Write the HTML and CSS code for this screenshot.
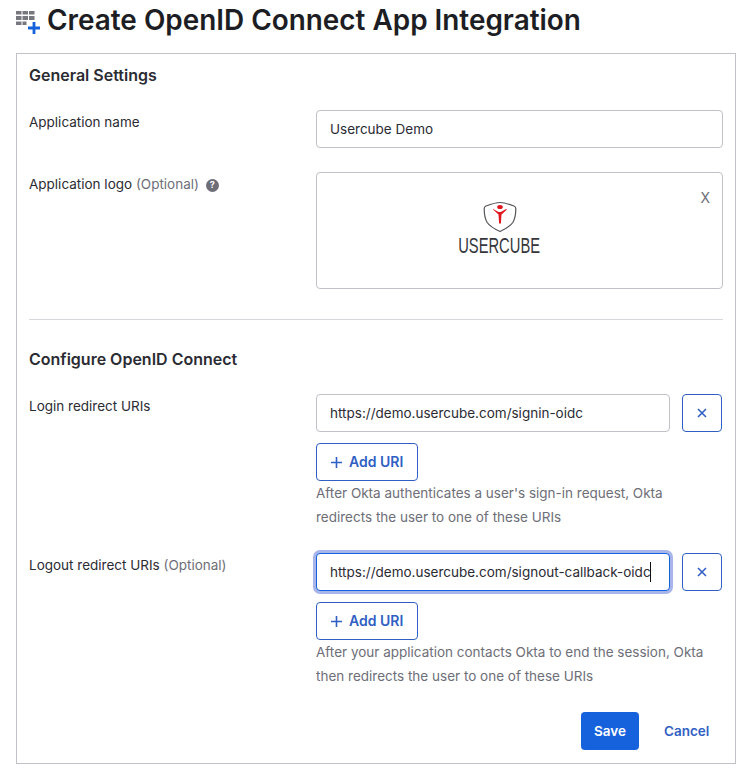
FILE: index.html
```html
<!DOCTYPE html>
<html lang="en">
<head>
<meta charset="utf-8">
<title>Create OpenID Connect App Integration</title>
<link rel="stylesheet" href="styles.css">
</head>
<body>
<header class="page-head">
  <svg class="head-icon" width="26" height="28" viewBox="0 0 26 28" aria-hidden="true">
    <g fill="#77777f">
      <rect x="0" y="1" width="5.500" height="3.500"/><rect x="6.500" y="1" width="5.500" height="3.500"/><rect x="13" y="1" width="5.500" height="3.500"/>
      <rect x="0" y="6" width="5.500" height="4"/><rect x="6.500" y="6" width="5.500" height="4"/><rect x="13" y="6" width="5.500" height="4"/>
      <rect x="0" y="11.500" width="5.500" height="3.500"/><rect x="6.500" y="11.500" width="4" height="3.500"/>
    </g>
    <path d="M18 12v12M12 18h12" stroke="#1662dd" stroke-width="2.800" fill="none"/>
  </svg>
  <h1 class="page-title">Create OpenID Connect App Integration</h1>
</header>

<main class="card">
  <h2 class="section-title">General Settings</h2>

  <div class="row row-name">
    <label class="label">Application name</label>
    <div class="control"><div class="input">Usercube Demo</div></div>
  </div>

  <div class="row row-logo">
    <label class="label">Application logo <span class="optional">(Optional)</span>
      <span class="help-dot">?</span></label>
    <div class="control">
      <div class="logo-box">
        <button class="logo-x">X</button>
        <div class="logo">
          <svg class="logo-mark" width="36" height="34" viewBox="27 0 36 34" aria-hidden="true">
            <path d="M45 3.500c4.500 0 10 2 14 3.500 1.300.5 1.800 1.300 1.800 2.500 0 5.500-.5 10-3 14-2.500 3.800-7.500 6.500-12.800 9-5.300-2.500-10.300-5.200-12.800-9-2.500-4-3-8.500-3-14 0-1.200.5-2 1.800-2.500 4-1.500 9.500-3.500 14-3.500z" fill="#fff" stroke="#55555a" stroke-width="1.200"/>
            <ellipse cx="45" cy="8" rx="2.800" ry="2" fill="#e0141c"/>
            <path d="M38 10.500l5.500 5 .6 9h1.800l.6-9 5.500-5-.9-.6-5.300 3.100h-2.400l-5.300-3.100z" fill="#e0141c"/>
          </svg>
          <span class="logo-text">USERCUBE</span>
        </div>
      </div>
    </div>
  </div>

  <hr class="divider">

  <h2 class="section-title section-oidc">Configure OpenID Connect</h2>

  <div class="row row-login">
    <label class="label">Login redirect URIs</label>
    <div class="control">
      <div class="uri-line">
        <div class="input">https://demo.usercube.com/signin-oidc</div>
        <button class="icon-btn" aria-label="Remove"><svg width="10" height="10" viewBox="0 0 10 10"><path d="M1 1l8 8M9 1l-8 8" stroke="#2f5fc4" stroke-width="1.600"/></svg></button>
      </div>
      <button class="add-btn"><svg width="11" height="11" viewBox="0 0 11 11"><path d="M5.500 0v11M0 5.500h11" stroke="#2f5fc4" stroke-width="1.600"/></svg>Add URI</button>
      <p class="hint">After Okta authenticates a user's sign-in request, Okta redirects the user to one of these URIs</p>
    </div>
  </div>

  <div class="row row-logout">
    <label class="label">Logout redirect URIs <span class="optional">(Optional)</span></label>
    <div class="control">
      <div class="uri-line">
        <div class="input input-focus"><span class="caret-text">https://demo.usercube.com/signout-callback-oidc</span></div>
        <button class="icon-btn" aria-label="Remove"><svg width="10" height="10" viewBox="0 0 10 10"><path d="M1 1l8 8M9 1l-8 8" stroke="#2f5fc4" stroke-width="1.600"/></svg></button>
      </div>
      <button class="add-btn"><svg width="11" height="11" viewBox="0 0 11 11"><path d="M5.500 0v11M0 5.500h11" stroke="#2f5fc4" stroke-width="1.600"/></svg>Add URI</button>
      <p class="hint">After your application contacts Okta to end the session, Okta then redirects the user to one of these URIs</p>
    </div>
  </div>

  <div class="actions">
    <button class="save">Save</button>
    <button class="cancel">Cancel</button>
  </div>
</main>
</body>
</html>
```
FILE: styles.css
```css
* { box-sizing: border-box; }
html, body { margin: 0; padding: 0; }
body {
  width: 751px;
  height: 780px;
  overflow: hidden;
  background: #fff;
  color: #2b2b33;
  font-family: Inter, "Noto Sans", sans-serif;
  font-size: 13.5px;
}
.page-head {
  display: flex;
  align-items: center;
  height: 53px;
  padding: 0 0 13px 16px;
  gap: 5px;
}
.head-icon { flex: none; margin-top: 7px; }
.page-title {
  margin: 0;
  font-size: 27.9px;
  line-height: 34px;
  font-weight: 600;
  color: #1d1d24;
  white-space: nowrap;
}
.card {
  margin-left: 16px;
  width: 720px;
  height: 711px;
  border: 1px solid #c1c1c8;
  padding: 11px 12px 0;
}
.section-title {
  margin: 0;
  font-size: 16px;
  line-height: 20px;
  font-weight: 600;
  color: #2b2b33;
}
.row { display: flex; }
.label {
  flex: none;
  width: 287px;
  line-height: 20px;
  color: #2b2b33;
}
.control { width: 407px; }
.optional { color: #6e6e78; }
.help-dot {
  display: inline-flex;
  align-items: center;
  justify-content: center;
  width: 13px;
  height: 13px;
  margin-left: 3px;
  border-radius: 50%;
  background: #6e6e78;
  color: #fff;
  font-size: 9px;
  font-weight: 700;
  vertical-align: 1px;
}
.input {
  flex: 1;
  height: 38px;
  padding: 0 13px;
  display: flex;
  align-items: center;
  border: 1px solid #c1c1c8;
  border-radius: 4px;
  background: #fff;
  line-height: 20px;
  white-space: nowrap;
  color: #2b2b33;
}
.row-name { margin-top: 25px; }
.row-name .label { padding-top: 2px; }
.row-logo { margin-top: 24px; }
.row-logo .label { padding-top: 2px; }
.logo-box {
  position: relative;
  height: 117px;
  border: 1px solid #c1c1c8;
  border-radius: 4px;
  display: flex;
  justify-content: center;
  padding: 26px 40px 0 0;
}
.logo {
  display: flex;
  flex-direction: column;
  align-items: center;
  gap: 1px;
}
.logo-mark { display: block; }
.logo-text {
  display: block;
  font-family: "Liberation Sans", sans-serif;
  font-size: 22px;
  line-height: 24px;
  color: #36363c;
  transform: scaleX(0.67);
}
.logo-x {
  position: absolute;
  top: 15px;
  right: 12px;
  padding: 0;
  border: 0;
  background: none;
  color: #6e6e78;
  font: 400 14px/20px Inter, sans-serif;
}
.divider {
  margin: 30px 0 0;
  border: 0;
  border-top: 1px solid #d7d7dc;
}
.section-oidc { margin-top: 29px; }
.row-login { margin-top: 25px; }
.row-login .label { padding-top: 2px; }
.row-logout { margin-top: 24px; }
.row-logout .label { padding-top: 2px; }
.uri-line {
  display: flex;
  gap: 12px;
  align-items: center;
}
.icon-btn {
  flex: none;
  width: 40px;
  height: 38px;
  margin-right: 1px;
  display: flex;
  align-items: center;
  justify-content: center;
  padding: 0;
  border: 1px solid #2f5fc4;
  border-radius: 4px;
  background: #fff;
}
.add-btn {
  display: flex;
  align-items: center;
  gap: 7px;
  width: 102px;
  height: 38px;
  margin-top: 11px;
  padding: 0 0 0 14px;
  border: 1px solid #2f5fc4;
  border-radius: 4px;
  background: #fff;
  color: #2f5fc4;
  font: 600 14px/20px Inter, sans-serif;
}
.hint {
  margin: 0;
  max-width: 395px;
  line-height: 24px;
  color: #6e6e78;
  font-size: 13.5px;
}
.input-focus {
  border-color: #1662dd;
  box-shadow: 0 0 0 3px #a7b5ea;
}
.caret-text {
  box-shadow: inset -1px 0 #111;
  line-height: 20px;
}
.actions {
  display: flex;
  align-items: center;
  margin-top: 24px;
  padding-left: 552px;
}
.save {
  width: 58px;
  height: 38px;
  padding: 0;
  border: 0;
  border-radius: 4px;
  background: #1662dd;
  color: #fff;
  font: 600 13.5px/20px Inter, sans-serif;
}
.cancel {
  margin-left: 25px;
  padding: 0;
  border: 0;
  background: none;
  color: #2f5fc4;
  font: 600 13.5px/20px Inter, sans-serif;
}
```
